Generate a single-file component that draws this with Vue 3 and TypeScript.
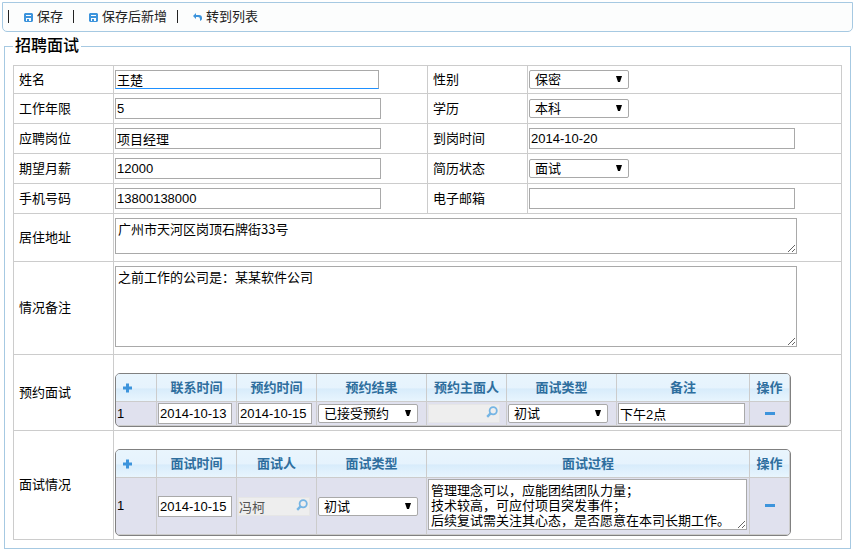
<script setup lang="ts">
import { reactive } from 'vue'

interface Field {
  id: string
  label: string
  type: 'text' | 'select'
  active?: boolean
}

const form = reactive<Record<string, string>>({
  name: '王楚',
  gender: '保密',
  years: '5',
  degree: '本科',
  post: '项目经理',
  arrival: '2014-10-20',
  salary: '12000',
  status: '面试',
  phone: '13800138000',
  email: '',
  address: '广州市天河区岗顶石牌街33号',
  remark: '之前工作的公司是：某某软件公司',
})

const options: Record<string, string[]> = {
  gender: ['保密', '男', '女'],
  degree: ['本科', '专科', '硕士'],
  status: ['面试', '录用', '淘汰'],
  result: ['已接受预约', '未接受预约'],
  kind: ['初试', '复试'],
}

const fieldRows: Field[][] = [
  [
    { id: 'name', label: '姓名', type: 'text', active: true },
    { id: 'gender', label: '性别', type: 'select' },
  ],
  [
    { id: 'years', label: '工作年限', type: 'text' },
    { id: 'degree', label: '学历', type: 'select' },
  ],
  [
    { id: 'post', label: '应聘岗位', type: 'text' },
    { id: 'arrival', label: '到岗时间', type: 'text' },
  ],
  [
    { id: 'salary', label: '期望月薪', type: 'text' },
    { id: 'status', label: '简历状态', type: 'select' },
  ],
  [
    { id: 'phone', label: '手机号码', type: 'text' },
    { id: 'email', label: '电子邮箱', type: 'text' },
  ],
]

const bookings = reactive([
  { contact: '2014-10-13', booked: '2014-10-15', result: '已接受预约', host: '', kind: '初试', note: '下午2点' },
])

const interviews = reactive([
  {
    date: '2014-10-15',
    person: '冯柯',
    kind: '初试',
    process: '管理理念可以，应能团结团队力量；\n技术较高，可应付项目突发事件；\n后续复试需关注其心态，是否愿意在本司长期工作。',
  },
])

function addBooking() {
  bookings.push({ contact: '', booked: '', result: '已接受预约', host: '', kind: '初试', note: '' })
}

function addInterview() {
  interviews.push({ date: '', person: '', kind: '初试', process: '' })
}
</script>

<template>
  <nav class="toolbar">
    <span class="bar"></span>
    <button type="button" class="tool">
      <svg class="icon" viewBox="0 0 9 9" aria-hidden="true">
        <path fill="#3d94dc" fill-rule="evenodd" d="M1 0h7l1 1v7l-1 1H1L0 8V1zM2 2v1h5V2zM2 5v3h1V6h2v2h2V5z" />
      </svg>保存
    </button>
    <span class="bar"></span>
    <button type="button" class="tool">
      <svg class="icon" viewBox="0 0 9 9" aria-hidden="true">
        <path fill="#3d94dc" fill-rule="evenodd" d="M1 0h7l1 1v7l-1 1H1L0 8V1zM2 2v1h5V2zM2 5v3h1V6h2v2h2V5z" />
      </svg>保存后新增
    </button>
    <span class="bar"></span>
    <a href="#" class="tool">
      <svg class="icon" viewBox="0 0 9 9" aria-hidden="true">
        <path fill="#3d94dc" d="M0 3l3-3v2h3q3 0 3 3v1q0 1-2 2V6q0-2-2-2H3v2z" />
      </svg>转到列表
    </a>
  </nav>

  <fieldset class="panel">
    <legend>招聘面试</legend>
    <table class="form">
      <colgroup>
        <col class="label-col" /><col /><col class="label-col" /><col />
      </colgroup>
      <tbody>
        <tr v-for="(row, r) in fieldRows" :key="r" :class="{ first: r === 0 }">
          <template v-for="f in row" :key="f.id">
            <th scope="row"><label :for="f.id">{{ f.label }}</label></th>
            <td>
              <input v-if="f.type === 'text'" :id="f.id" v-model="form[f.id]" type="text" class="box wide" :class="{ active: f.active }" />
              <span v-else class="select">
                <select :id="f.id" v-model="form[f.id]">
                  <option v-for="o in options[f.id]" :key="o">{{ o }}</option>
                </select>
                <svg class="arrow" viewBox="0 0 6 6" aria-hidden="true"><path d="M0 0h6L4 6H2z" /></svg>
              </span>
            </td>
          </template>
        </tr>
        <tr>
          <th scope="row"><label for="address">居住地址</label></th>
          <td colspan="3" class="area-cell"><textarea id="address" v-model="form.address" class="area short"></textarea></td>
        </tr>
        <tr>
          <th scope="row"><label for="remark">情况备注</label></th>
          <td colspan="3" class="area-cell"><textarea id="remark" v-model="form.remark" class="area tall"></textarea></td>
        </tr>
        <tr>
          <th scope="row">预约面试</th>
          <td colspan="3" class="grid-cell">
            <div class="grid">
              <table>
                <colgroup>
                  <col class="c41" /><col class="c80" /><col class="c80" /><col class="c110" />
                  <col class="c80" /><col class="c110" /><col /><col class="c40" />
                </colgroup>
                <thead>
                  <tr>
                    <th class="act">
                      <button type="button" class="mini" aria-label="新增" @click="addBooking">
                        <svg viewBox="0 0 9 9" aria-hidden="true"><path fill="#3d94dc" d="M3 0h3v3h3v3H6v3H3V6H0V3h3z" /></svg>
                      </button>
                    </th>
                    <th>联系时间</th><th>预约时间</th><th>预约结果</th><th>预约主面人</th><th>面试类型</th><th>备注</th><th>操作</th>
                  </tr>
                </thead>
                <tbody>
                  <tr v-for="(b, i) in bookings" :key="i">
                    <td>{{ i + 1 }}</td>
                    <td><input v-model="b.contact" type="text" class="box date" aria-label="联系时间" /></td>
                    <td><input v-model="b.booked" type="text" class="box date" aria-label="预约时间" /></td>
                    <td>
                      <span class="select">
                        <select v-model="b.result" aria-label="预约结果"><option v-for="o in options.result" :key="o">{{ o }}</option></select>
                        <svg class="arrow" viewBox="0 0 6 6" aria-hidden="true"><path d="M0 0h6L4 6H2z" /></svg>
                      </span>
                    </td>
                    <td>
                      <span class="lookup">
                        <input v-model="b.host" type="text" readonly aria-label="预约主面人" />
                        <svg class="lens" viewBox="0 0 10 10" aria-hidden="true"><path d="M4 6L1 9" stroke-width="2" /><circle cx="6" cy="4" r="3" /></svg>
                      </span>
                    </td>
                    <td>
                      <span class="select">
                        <select v-model="b.kind" aria-label="面试类型"><option v-for="o in options.kind" :key="o">{{ o }}</option></select>
                        <svg class="arrow" viewBox="0 0 6 6" aria-hidden="true"><path d="M0 0h6L4 6H2z" /></svg>
                      </span>
                    </td>
                    <td><input v-model="b.note" type="text" class="box note" aria-label="备注" /></td>
                    <td class="act">
                      <button type="button" class="mini" aria-label="删除" @click="bookings.splice(i, 1)">
                        <svg viewBox="0 0 10 10" aria-hidden="true"><path fill="#3d94dc" d="M0 3h10v3H0z" /></svg>
                      </button>
                    </td>
                  </tr>
                </tbody>
              </table>
            </div>
          </td>
        </tr>
        <tr>
          <th scope="row">面试情况</th>
          <td colspan="3" class="grid-cell">
            <div class="grid">
              <table>
                <colgroup>
                  <col class="c41" /><col class="c80" /><col class="c80" /><col class="c110" /><col /><col class="c40" />
                </colgroup>
                <thead>
                  <tr>
                    <th class="act">
                      <button type="button" class="mini" aria-label="新增" @click="addInterview">
                        <svg viewBox="0 0 9 9" aria-hidden="true"><path fill="#3d94dc" d="M3 0h3v3h3v3H6v3H3V6H0V3h3z" /></svg>
                      </button>
                    </th>
                    <th>面试时间</th><th>面试人</th><th>面试类型</th><th>面试过程</th><th>操作</th>
                  </tr>
                </thead>
                <tbody>
                  <tr v-for="(v, i) in interviews" :key="i">
                    <td>{{ i + 1 }}</td>
                    <td><input v-model="v.date" type="text" class="box date" aria-label="面试时间" /></td>
                    <td>
                      <span class="lookup">
                        <input v-model="v.person" type="text" readonly aria-label="面试人" />
                        <svg class="lens" viewBox="0 0 10 10" aria-hidden="true"><path d="M4 6L1 9" stroke-width="2" /><circle cx="6" cy="4" r="3" /></svg>
                      </span>
                    </td>
                    <td>
                      <span class="select">
                        <select v-model="v.kind" aria-label="面试类型"><option v-for="o in options.kind" :key="o">{{ o }}</option></select>
                        <svg class="arrow" viewBox="0 0 6 6" aria-hidden="true"><path d="M0 0h6L4 6H2z" /></svg>
                      </span>
                    </td>
                    <td class="process"><textarea v-model="v.process" class="area log" aria-label="面试过程"></textarea></td>
                    <td class="act">
                      <button type="button" class="mini" aria-label="删除" @click="interviews.splice(i, 1)">
                        <svg viewBox="0 0 10 10" aria-hidden="true"><path fill="#3d94dc" d="M0 3h10v3H0z" /></svg>
                      </button>
                    </td>
                  </tr>
                </tbody>
              </table>
            </div>
          </td>
        </tr>
      </tbody>
    </table>
  </fieldset>
</template>

<style>
body {
  background: #fff;
  color: #000;
  font: 13px/16px "Liberation Sans", "Noto Sans CJK SC", sans-serif;
}
</style>

<style scoped>
* {
  box-sizing: border-box;
}
input,
select,
textarea,
button {
  margin: 0;
  font: inherit;
  color: inherit;
}
.toolbar {
  display: flex;
  align-items: center;
  height: 30px;
  margin: 2px 2px 5px;
  padding-left: 5px;
  border: 1px solid #a6c9e2;
  border-radius: 0 0 5px 5px;
  background: #fcfdfd;
  color: #222;
}
.bar {
  width: 1px;
  height: 13px;
  margin-bottom: 2px;
  background: #222;
}
.tool {
  display: flex;
  align-items: center;
  gap: 4px;
  margin: 0 10px 0 15px;
  padding: 0;
  border: 0;
  background: none;
  color: #222;
  text-decoration: none;
}
.icon {
  width: 9px;
  height: 9px;
}
.panel {
  min-width: 0;
  margin: 0 4px;
  padding: 10px 8px 8px;
  border: 1px solid #a6c9e2;
}
legend {
  padding: 0 2px;
  font-size: 16px;
  line-height: 18px;
  font-weight: 500;
}
.form {
  width: 100%;
  table-layout: fixed;
  border-collapse: collapse;
}
.form > tbody > tr {
  height: 30px;
}
.form > tbody > tr.first {
  height: 28px;
}
.form > tbody > tr > th,
.form > tbody > tr > td {
  padding: 0 1px;
  border: 1px solid #ccc;
}
.form > tbody > tr > th {
  padding-left: 5px;
  text-align: left;
  font-weight: 400;
}
.label-col {
  width: 100px;
}
.form > tbody > tr > .area-cell {
  padding: 4px 1px 7px;
}
.form > tbody > tr > .grid-cell {
  padding: 18px 1px 3px;
}
.box {
  display: block;
  height: 21px;
  padding: 0 1px;
  border: 1px solid #a9a9a9;
  background: #fff;
  outline: 0;
}
.wide {
  width: 266px;
}
.box.active {
  width: 264px;
  height: 19px;
  border-bottom: 1px solid #1e90ff;
}
.date {
  width: 74px;
}
.note {
  width: 127px;
}
.select {
  display: block;
  position: relative;
  width: 100px;
}
.select select {
  display: block;
  width: 100%;
  height: 19px;
  padding: 0 16px 0 5px;
  border: 1px solid #a9a9a9;
  border-radius: 2px;
  background: #fff;
  appearance: none;
  line-height: 17px;
}
.arrow {
  position: absolute;
  top: 6px;
  right: 7px;
  width: 6px;
  height: 6px;
  pointer-events: none;
}
.area {
  display: block;
  padding: 2px;
  border: 1px solid #a9a9a9;
  background: #fff;
  line-height: 15px;
  font-family: "Noto Sans CJK SC", sans-serif;
  overflow: hidden;
  resize: both;
}
.short,
.tall {
  width: 682px;
}
.short {
  height: 36px;
}
.tall {
  height: 81px;
}
.log {
  width: 319px;
  height: 51px;
}
.grid {
  width: 676px;
  overflow: hidden;
  border: 1px solid #808080;
  border-radius: 5px;
  background: #e0e1ee;
}
.grid table {
  width: 100%;
  table-layout: fixed;
  border-spacing: 0;
}
.grid th,
.grid td {
  padding: 0 1px;
  border-right: 1px solid #ccc;
  border-bottom: 1px solid #ccc;
}
.grid th {
  height: 28px;
  padding: 0;
  background: linear-gradient(#e9f5fd, #e6f3fd 50%, #d8ecfb 56%, #e8f5fe);
  color: #2e6e9e;
  white-space: nowrap;
}
.grid tbody td {
  height: 24px;
}
.grid .process {
  padding: 1px 1px 4px;
}
.c40 {
  width: 40px;
}
.c41 {
  width: 41px;
}
.c80 {
  width: 80px;
}
.c110 {
  width: 110px;
}
.lookup {
  display: block;
  position: relative;
  width: 72px;
}
.lookup input {
  display: block;
  width: 100%;
  height: 19px;
  padding: 0 16px 0 0;
  border: 1px solid #e6e6e6;
  background: #eee;
  color: #555;
  outline: 0;
}
.lens {
  position: absolute;
  top: 2px;
  right: 2px;
  width: 12px;
  height: 12px;
  fill: none;
  stroke: #75b5e4;
  stroke-width: 1.5;
}
.mini {
  display: block;
  width: 10px;
  height: 10px;
  padding: 0;
  border: 0;
  background: none;
}
.act .mini {
  margin: 0 auto;
}
thead .act .mini {
  width: 9px;
  margin: 0 7px;
}
.mini svg {
  display: block;
  width: 100%;
  height: 100%;
}
</style>
